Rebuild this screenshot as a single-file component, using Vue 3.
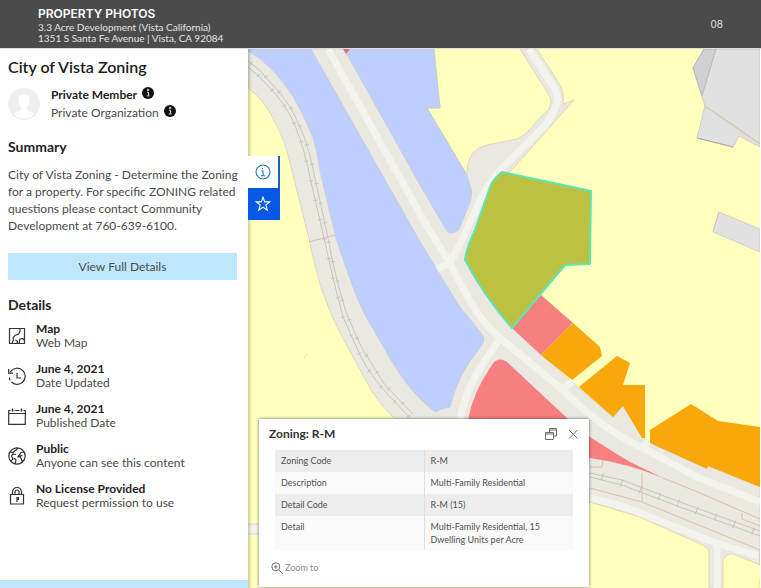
<script setup>
const details = [
  { icon: 'map', title: 'Map', text: 'Web Map' },
  { icon: 'history', title: 'June 4, 2021', text: 'Date Updated' },
  { icon: 'calendar', title: 'June 4, 2021', text: 'Published Date' },
  { icon: 'globe', title: 'Public', text: 'Anyone can see this content' },
  { icon: 'lock', title: 'No License Provided', text: 'Request permission to use' },
]

const attributes = [
  ['Zoning Code', 'R-M'],
  ['Description', 'Multi-Family Residential'],
  ['Detail Code', 'R-M (15)'],
  ['Detail', 'Multi-Family Residential, 15 Dwelling Units per Acre'],
]
</script>

<template>
  <div class="page">
    <header class="banner">
      <div>
        <h1>PROPERTY PHOTOS</h1>
        <p>3.3 Acre Development (Vista California)</p>
        <p>1351 S Santa Fe Avenue | Vista, CA 92084</p>
      </div>
      <span class="page-number">08</span>
    </header>

    <div class="content">
      <aside class="sidebar">
        <div class="sidebar-body">
          <h2>City of Vista Zoning</h2>
          <div class="owner">
            <svg class="avatar" viewBox="0 0 32 32" aria-hidden="true">
              <circle cx="16" cy="16" r="16" fill="#efefef" />
              <path d="M16 6c-4 0-6 3-5.600 7 .2 3 1.600 5 3 6v2.500c-1.500 2-5.500 2-7.400 4.500 2.500 3 6 4.500 10 4.500s7.500-1.500 10-4.500c-1.900-2.500-5.900-2.500-7.400-4.500V19c1.400-1 2.800-3 3-6 .4-4-1.600-7-5.600-7z" fill="#fff" />
            </svg>
            <div class="owner-names">
              <p class="member">Private Member
                <svg class="badge" viewBox="0 0 12 12" aria-hidden="true"><circle cx="6" cy="6" r="6" fill="#111" /><path d="M5 5.200h1.600v3.600M4.800 8.900h2.800M5.500 2.300h1.200v1.200H5.500z" fill="none" stroke="#ddd" stroke-width="1" /></svg>
              </p>
              <p>Private Organization
                <svg class="badge" viewBox="0 0 12 12" aria-hidden="true"><circle cx="6" cy="6" r="6" fill="#111" /><path d="M5 5.200h1.600v3.600M4.800 8.900h2.800M5.500 2.300h1.200v1.200H5.500z" fill="none" stroke="#ddd" stroke-width="1" /></svg>
              </p>
            </div>
          </div>
          <h3>Summary</h3>
          <p class="summary">City of Vista Zoning - Determine the Zoning for a property. For specific ZONING related questions please contact Community Development at 760-639-6100.</p>
          <button type="button" class="full-details">View Full Details</button>
          <h3>Details</h3>
          <ul class="details">
            <li v-for="item in details" :key="item.title + item.text">
              <svg class="detail-icon" viewBox="0 0 18 18" aria-hidden="true">
                <g v-if="item.icon === 'map'">
                  <path d="M1.500 1.500h15v15h-15z" />
                  <path d="M12 2v2.500L10.500 7 7 8.500 5 11l.5 2L4 16M9 16.500l.5-2-2-1.500M11 16l1-4 3-.5L16.500 14" />
                </g>
                <g v-else-if="item.icon === 'history'">
                  <path d="M2.300 5A8 8 0 1 1 1.200 10.500" stroke-dasharray="39 2 3 2" />
                  <path d="M.7 2v4.200H5M9 6v5h4" />
                </g>
                <g v-else-if="item.icon === 'calendar'">
                  <path d="M.7 3.500h16.600v13.800H.7zM.7 6.500h16.600" />
                  <path d="M4.500 1.500v3M13.500 1.500v3" />
                  <path d="M2.500 3.500h1M5.500 3.500h1M11.500 3.500h1M14.500 3.500h1" stroke="#fff" />
                </g>
                <g v-else-if="item.icon === 'globe'">
                  <circle cx="9" cy="9" r="8.200" />
                  <path d="M2 5l3 .5L8 3l2-2M3 14l2-2-1.500-3L5 7l3 .5M7 17l1-4-2-2M16 5l-3 .5-3 4.500h2.500L14 14l2.500-1M11 10l2-1.500 1.500.5" />
                </g>
                <g v-else>
                  <path d="M2.500 7.500h13v9.500h-13zM4.500 7.500V5a4.500 4.500 0 0 1 9 0v2.500M7 7.500V5a2 2 0 0 1 4 0v2.500" />
                  <path d="M9 10v5M9 10.500h1.500v2H9" />
                </g>
              </svg>
              <div>
                <strong>{{ item.title }}</strong>
                <span>{{ item.text }}</span>
              </div>
            </li>
          </ul>
        </div>
        <div class="sidebar-footer"></div>
      </aside>

      <main class="map">
        <svg class="map-canvas" viewBox="248 49 512 539" preserveAspectRatio="xMinYMin slice" role="img" aria-label="Zoning map">
          <path fill="#ffffbe" d="M248 49h512v539H248z" />
          <path fill="#ebe8e2" stroke="#d6d0b8" stroke-width=".8" d="M248 49H434L440 108H427L467 175Q466 163 473 153Q478 147 487 145L517 139Q528 134 535 123L549 109Q553 102 549 95L520 49H537L560 85Q564 91 563 104L574 100L510 172H502L492 181L475 230L465 260L512 328L541 355L580 389L613 417L623 406L643 438L650 443L707 468L708 466L760 487V565L733 554Q725 553 723 562V588H709V552Q708 547 700 544L640 517L590 502L470 472Q430 455 396 420Q382 407 371 390L345 342Q331 317 323 293Q315 270 309 238L298 195L288 155Q284 139 278 128Q265 100 248 88z" />
          <path fill="#ebe8e2" d="M248 523h14v12h-14z" />
          <g fill="#becfff" stroke="#c8c9cf" stroke-width=".7">
            <path d="M248 49H311L418 238L442 278L460 307L481 333Q486 338 482 345L470 361Q456 382 450 407Q443 408 435 412Q411 394 391 360L365 315Q355 295 348 273Q341 254 336 238L320 171Q317 151 313 138Q307 123 301 111Q293 95 285 85Q268 62 248 51z" />
            <path d="M344 49H434L440 108H427L467 175L471 188Q473 194 469 205L460 227Q456 234 450 233Q448 233 445 228L420 185z" />
          </g>
          <path fill="#dd737c" d="M343 49h7l-4 5z" />
          <g fill="#f67f7f">
            <path d="M468 420Q473 393 490 368Q497 355 507 362L567 418L590 437Q610 450 630 462L663 478Q627 463 590 458L550 440z" />
            <path d="M512 328L541 295L573 323L541 355z" />
          </g>
          <g fill="#f9a80b">
            <path d="M573 323L600 347L602 356L572 380L541 355z" />
            <path d="M579 387L617 356L630 363L623 385H645V438H642L623 406L613 417z" />
            <path d="M650 430L691 404L718 421L760 427V487L708 466L707 469L650 443z" />
          </g>
          <g fill="none" stroke="#f4f4ee" stroke-width="7" stroke-linejoin="round">
            <path d="M328 49L428 228L450 263Q461 287 477 312Q486 326 500 338L563 390Q602 430 647 450L697 477L760 502" />
            <path d="M529 49L555 89Q560 98 554 111L545 126L507 163Q486 184 477 207L463 238L450 263L437 269" />
            <path d="M500 338L477 373Q464 396 460 420M563 389L573 381M642 450L648 441" />
            <path d="M590 498Q620 504 650 517L713 542L758 556M717 544V588M248 529H262" />
          </g>
          <g fill="none" stroke="#c6c5bf" stroke-width="1">
            <path d="M248 61Q261 70 271 83Q288 101 295 116Q305 136 310 155L328 238Q334 273 346 312Q354 332 363 350L385 385L413 414" />
            <path d="M248 67Q260 76 270 88Q285 104 293 121Q302 142 306 160L324 238L333 278L343 317L360 355Q373 381 396 403L410 418" />
            <path d="M590 473L622 480L680 502L760 531M590 477L622 485L680 507L760 536" />
          </g>
          <g fill="none" stroke="#c6c5bf" stroke-width="4" stroke-dasharray="1 19">
            <path d="M251 63Q261 70 271 83Q288 101 295 116Q305 136 310 155L328 238Q334 273 346 312Q354 332 363 350L385 385L413 414" />
            <path d="M258 75Q264 80 270 88Q285 104 293 121Q302 142 306 160L324 238L333 278L343 317L360 355Q373 381 396 403L410 418" />
            <path stroke-width="8" d="M602 477L622 483L680 504L760 534" />
          </g>
          <g fill="none" stroke="#cec5ae" stroke-width="1">
            <path d="M309 242L335 235M590 488L642 502L760 550V565M642 473V502M663 478L700 493L760 519M590 467H602L603 460M742 513V519L760 526" />
          </g>
          <path fill="#e1e1e1" stroke="#cac4b5" stroke-width=".8" d="M704 49L693 68L705 106L697 138L733 147L739 136L760 147V49z" />
          <path fill="#d1d0d3" stroke="#aaa9ad" stroke-width=".7" d="M704 49H716L702 96L693 68z" />
          <path fill="none" stroke="#d4cbb0" stroke-width="1.500" d="M705 106L760 144" />
          <path fill="none" stroke="#aaa9a2" d="M697 138L733 147M719 212L713 232" />
          <path fill="#e1e1e1" stroke="#cecabd" stroke-width=".8" d="M719 212L760 229V252L713 232z" />
          <path fill="#bdc142" stroke="#5de6b5" stroke-width="2" stroke-linejoin="round" d="M502 172L591 191L590 264L565 265L512 328Q486 299 465 260Q466 249 475 230L490 187Q492 180 502 172z" />
          <path fill="#ffff32" d="M759 579h1v9h-1z" />
          <path fill="none" stroke="#ebe7b0" d="M307 353l-3 6" />
        </svg>

        <div class="tools">
          <button type="button" class="tool" aria-label="Information">
            <svg viewBox="0 0 16 16"><circle cx="8" cy="8" r="7" /><path d="M6.500 7H8v4.500M6 11.800h4M7.500 4v1.200" /></svg>
          </button>
          <button type="button" class="tool tool-active" aria-label="Favorite">
            <svg viewBox="0 0 16 16"><path d="M8 1.200l1.700 4.700h5L10.800 9l1.500 5.200L8 11.200l-4.300 3L5.200 9 1.300 5.900h5z" /></svg>
          </button>
        </div>

        <section class="popup">
          <div class="popup-head">
            <h3>Zoning: R-M</h3>
            <button type="button" aria-label="Dock">
              <svg viewBox="0 0 12 12"><path d="M4.500 4V.5h7V8h-3M4.500 2h7M.5 4.500h8v7h-8zM.5 6h8" /></svg>
            </button>
            <button type="button" aria-label="Close">
              <svg viewBox="0 0 12 12"><path d="M2 2l8.500 8.500M10.500 2L2 10.500" /></svg>
            </button>
          </div>
          <table>
            <tbody>
              <tr v-for="[name, value] in attributes" :key="name">
                <th scope="row">{{ name }}</th>
                <td>{{ value }}</td>
              </tr>
            </tbody>
          </table>
          <button type="button" class="zoom-to">
            <svg viewBox="0 0 12 12"><circle cx="4.800" cy="4.800" r="4" /><path d="M7.800 7.800l4 4M3 4.800h3.600M4.800 3v3.600" /></svg>
            Zoom to
          </button>
        </section>
      </main>
    </div>
  </div>
</template>

<style>
body {
  margin: 0;
}
</style>

<style scoped>
.page {
  display: flex;
  flex-direction: column;
  min-height: 100vh;
  background: #fff;
  color: #4a4a4a;
  font-family: Lato, "Liberation Sans", sans-serif;
  font-size: 12px;
}
h1, h2, h3, p, ul {
  margin: 0;
  padding: 0;
}
button {
  margin: 0;
  padding: 0;
  border: 0;
  background: none;
  color: inherit;
  font: inherit;
}
.banner {
  display: flex;
  align-items: center;
  justify-content: space-between;
  box-sizing: border-box;
  min-height: 49px;
  padding: 4px 38px 3px;
  border-bottom: 1px solid #dedede;
  background: #4b4b4c;
  color: #e4e4e4;
  font-size: 10px;
  line-height: 11px;
}
.banner h1,
.page-number {
  font-family: Inter, "Liberation Sans", sans-serif;
}
.banner h1 {
  color: #fff;
  font-size: 12px;
  font-weight: 600;
  line-height: 16px;
}
.content {
  display: flex;
  flex: 1;
}
.sidebar {
  display: flex;
  flex: 0 0 248px;
  flex-direction: column;
  justify-content: space-between;
}
.sidebar-body {
  padding: 7px 11px 0 8px;
}
.sidebar-footer {
  height: 8px;
  background: #bfe6ff;
}
h2 {
  color: #1c1c1c;
  font-size: 16px;
  font-weight: 600;
  line-height: 22px;
}
.owner {
  display: flex;
  align-items: center;
  gap: 11px;
  margin-top: 8px;
  line-height: 18px;
}
.avatar {
  width: 32px;
  height: 32px;
}
.member {
  color: #242424;
  font-weight: 700;
}
.badge {
  width: 12px;
  height: 12px;
  margin-left: 2px;
}
.sidebar h3 {
  margin-top: 16px;
  color: #242424;
  font-size: 14px;
  font-weight: 700;
  line-height: 18px;
}
.summary {
  margin: 10px -7px 0 0;
  line-height: 17px;
}
.full-details {
  display: block;
  width: 100%;
  margin-top: 19px;
  background: #bfe6ff;
  line-height: 27px;
}
.details {
  display: flex;
  flex-direction: column;
  gap: 12px;
  margin-top: 8px;
  list-style: none;
}
.details li {
  display: flex;
  align-items: center;
  gap: 10px;
  line-height: 14px;
}
.details strong,
.details span {
  display: block;
}
.details strong {
  color: #242424;
}
.detail-icon {
  width: 18px;
  height: 18px;
  fill: none;
  stroke: #333;
  stroke-width: 1.2;
}
.map {
  position: relative;
  flex: 1;
  overflow: hidden;
  border-right: 1px solid #fff;
  background: #ffffbe;
}
.map::after {
  content: "";
  position: absolute;
  inset: 0 auto 0 0;
  width: 4px;
  background: linear-gradient(90deg, rgba(0, 0, 0, 0.2), rgba(0, 0, 0, 0));
}
.map-canvas {
  position: absolute;
  width: 100%;
  height: 100%;
}
.tools {
  position: absolute;
  z-index: 1;
  top: 107px;
  left: 0;
  width: 32px;
}
.tool {
  display: flex;
  align-items: center;
  justify-content: center;
  box-sizing: border-box;
  width: 100%;
  height: 32px;
  border-right: 2px solid #1464c8;
  background: #fff;
  color: #2470bd;
}
.tool-active {
  border-color: #0758e4;
  background: #0758e4;
  color: #fff;
}
.tool svg {
  width: 16px;
  height: 16px;
  fill: none;
  stroke: currentColor;
  stroke-width: 1.1;
}
.popup {
  position: absolute;
  z-index: 1;
  bottom: 1px;
  left: 11px;
  box-sizing: border-box;
  width: 330px;
  padding: 7px 16px 13px;
  background: #fff;
  box-shadow: 0 0 3px rgba(0, 0, 0, 0.6);
  font-size: 9px;
}
.popup-head {
  display: flex;
  align-items: center;
  gap: 10px;
  margin: 0 -6px 8px;
}
.popup h3 {
  flex: 1;
  color: #323232;
  font-size: 12px;
  font-weight: 700;
  line-height: 16px;
}
.popup-head svg,
.zoom-to svg {
  display: block;
  width: 12px;
  height: 12px;
  fill: none;
  stroke: #6e6e6e;
  stroke-width: 1;
}
table {
  width: 100%;
  border-collapse: collapse;
  line-height: 13px;
}
tr {
  background: #fafafa;
}
tr:nth-child(odd) {
  background: #ededed;
}
th,
td {
  width: 50%;
  box-sizing: border-box;
  padding: 4px 6px 5px;
  color: #505050;
  font-weight: 400;
  text-align: left;
  vertical-align: top;
}
th {
  border-right: 1px solid #dedede;
}
tr:last-child td {
  padding: 4px 24px 4px 6px;
}
.zoom-to {
  display: flex;
  align-items: center;
  gap: 2px;
  margin: 11px 0 0 -4px;
  color: #8a8a8a;
  line-height: 13px;
}
</style>
